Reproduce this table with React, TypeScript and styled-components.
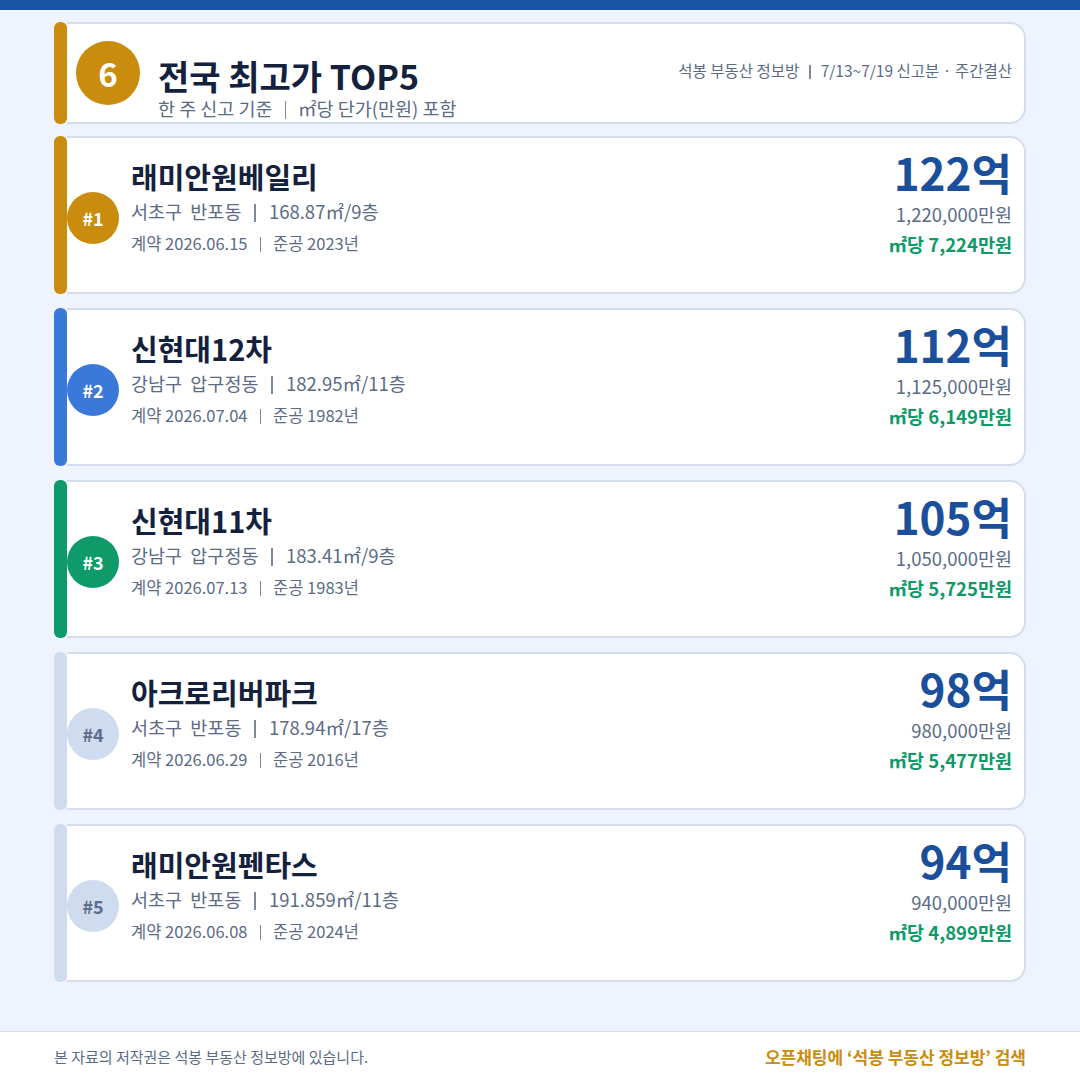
import styled, { createGlobalStyle } from 'styled-components';

const GlobalStyle = createGlobalStyle`
  html, body {
    margin: 0;
    padding: 0;
    background: #eef3fd;
  }
  * {
    box-sizing: border-box;
  }
  body {
    font-family: "Noto Sans CJK KR", "Noto Sans", sans-serif;
  }
`;

type Rank = {
  rank: number;
  name: string;
  location: string;
  area: string;
  contract: string;
  built: string;
  price: string;
  won: string;
  perArea: string;
  accent: string;
  badgeText: string;
};

const ranks: Rank[] = [
  {
    rank: 1,
    name: '래미안원베일리',
    location: '서초구  반포동',
    area: '168.87㎡/9층',
    contract: '2026.06.15',
    built: '2023',
    price: '122',
    won: '1,220,000만원',
    perArea: '7,224',
    accent: '#c98c0c',
    badgeText: '#ffffff',
  },
  {
    rank: 2,
    name: '신현대12차',
    location: '강남구  압구정동',
    area: '182.95㎡/11층',
    contract: '2026.07.04',
    built: '1982',
    price: '112',
    won: '1,125,000만원',
    perArea: '6,149',
    accent: '#3a78d9',
    badgeText: '#ffffff',
  },
  {
    rank: 3,
    name: '신현대11차',
    location: '강남구  압구정동',
    area: '183.41㎡/9층',
    contract: '2026.07.13',
    built: '1983',
    price: '105',
    won: '1,050,000만원',
    perArea: '5,725',
    accent: '#0f9a6a',
    badgeText: '#ffffff',
  },
  {
    rank: 4,
    name: '아크로리버파크',
    location: '서초구  반포동',
    area: '178.94㎡/17층',
    contract: '2026.06.29',
    built: '2016',
    price: '98',
    won: '980,000만원',
    perArea: '5,477',
    accent: '#cfdbef',
    badgeText: '#5c6d8c',
  },
  {
    rank: 5,
    name: '래미안원펜타스',
    location: '서초구  반포동',
    area: '191.859㎡/11층',
    contract: '2026.06.08',
    built: '2024',
    price: '94',
    won: '940,000만원',
    perArea: '4,899',
    accent: '#cfdbef',
    badgeText: '#5c6d8c',
  },
];

export default function App() {
  return (
    <Page>
      <GlobalStyle />
      <TopBar />
      <Main>
        <Row $height={102}>
          <Accent $color="#c98c0c" />
          <HeaderBody>
            <HeaderNumber>6</HeaderNumber>
            <TitleBlock>
              <Title>전국 최고가 TOP5</Title>
              <Subtitle>
                한 주 신고 기준<Sep $gap={12} />㎡당 단가(만원) 포함
              </Subtitle>
            </TitleBlock>
            <HeaderMeta>
              석봉 부동산 정보방<Sep $gap={10} />7/13~7/19 신고분 · 주간결산
            </HeaderMeta>
          </HeaderBody>
        </Row>
        <List>
          {ranks.map((r) => (
            <Row key={r.rank} $height={158}>
              <Accent $color={r.accent} />
              <CardBody>
                <Badge $bg={r.accent} $fg={r.badgeText}>#{r.rank}</Badge>
                <Info>
                  <Name>{r.name}</Name>
                  <Location>
                    {r.location}
                    <Sep $gap={13} />
                    {r.area}
                  </Location>
                  <Contract>
                    계약 {r.contract}
                    <Sep $gap={12} />
                    준공 {r.built}년
                  </Contract>
                </Info>
                <PriceBlock>
                  <Price>{r.price}억</Price>
                  <Won>{r.won}</Won>
                  <PerArea>㎡당 {r.perArea}만원</PerArea>
                </PriceBlock>
              </CardBody>
            </Row>
          ))}
        </List>
      </Main>
      <Footer>
        <Copyright>본 자료의 저작권은 석봉 부동산 정보방에 있습니다.</Copyright>
        <Search>오픈채팅에 ‘석봉 부동산 정보방’ 검색</Search>
      </Footer>
    </Page>
  );
}

const Page = styled.div`
  width: 1080px;
  height: 1080px;
  display: flex;
  flex-direction: column;
  background: #eef3fd;
  overflow: hidden;
`;

const TopBar = styled.div`
  height: 10px;
  flex-shrink: 0;
  background: #1b55a2;
`;

const Main = styled.main`
  flex: 1;
  padding: 12px 54px 0;
  display: flex;
  flex-direction: column;
  gap: 12px;
`;

const List = styled.div`
  display: flex;
  flex-direction: column;
  gap: 14px;
`;

const Row = styled.section<{ $height: number }>`
  display: flex;
  height: ${(p) => p.$height}px;
`;

const Accent = styled.div<{ $color: string }>`
  width: 13px;
  flex-shrink: 0;
  border-radius: 6px;
  background: ${(p) => p.$color};
`;

const Sep = styled.span<{ $gap: number }>`
  display: inline-block;
  width: 1.5px;
  height: 0.95em;
  margin: 0 ${(p) => p.$gap}px;
  background: currentColor;
  opacity: 0.8;
  vertical-align: -0.15em;
`;

const HeaderBody = styled.div`
  flex: 1;
  display: flex;
  align-items: center;
  background: #fff;
  border: 2px solid #d3ddef;
  border-left: none;
  border-radius: 0 16px 16px 0;
  padding: 0 12px 0 9px;
`;

const HeaderNumber = styled.div`
  width: 64px;
  height: 64px;
  border-radius: 50%;
  background: #c98c0c;
  color: #fff;
  font-size: 33px;
  font-weight: 700;
  display: flex;
  align-items: center;
  justify-content: center;
  flex-shrink: 0;
`;

const TitleBlock = styled.div`
  align-self: flex-start;
  padding-top: 33px;
  margin-left: 18px;
  display: flex;
  flex-direction: column;
  gap: 2px;
  flex: 1;
`;

const Title = styled.h1`
  margin: 0;
  font-size: 34px;
  line-height: 38px;
  font-weight: 700;
  color: #14213d;
`;

const Subtitle = styled.div`
  font-size: 18.5px;
  line-height: 22px;
  color: #5b6b85;
  white-space: nowrap;
`;

const HeaderMeta = styled.div`
  font-size: 15.5px;
  line-height: 20px;
  color: #5b6b85;
  margin-bottom: 6px;
  white-space: nowrap;
`;

const CardBody = styled.div`
  flex: 1;
  display: flex;
  align-items: flex-start;
  background: #fff;
  border: 2px solid #d3ddef;
  border-left: none;
  border-radius: 0 16px 16px 0;
  padding-right: 12px;
`;

const Badge = styled.div<{ $bg: string; $fg: string }>`
  align-self: center;
  margin-top: 6px;
  width: 52px;
  height: 52px;
  border-radius: 50%;
  background: ${(p) => p.$bg};
  color: ${(p) => p.$fg};
  font-size: 18px;
  font-weight: 700;
  display: flex;
  align-items: center;
  justify-content: center;
  flex-shrink: 0;
`;

const Info = styled.div`
  flex: 1;
  margin-left: 12px;
  padding-top: 20px;
  display: flex;
  flex-direction: column;
`;

const Name = styled.div`
  font-size: 29px;
  line-height: 36px;
  font-weight: 700;
  color: #14213d;
`;

const Location = styled.div`
  margin-top: 4px;
  font-size: 18.5px;
  line-height: 26px;
  color: #5b6b85;
  white-space: pre;
`;

const Contract = styled.div`
  margin-top: 7px;
  font-size: 16.5px;
  line-height: 24px;
  color: #5b6b85;
  white-space: pre;
`;

const PriceBlock = styled.div`
  padding-top: 9px;
  display: flex;
  flex-direction: column;
  align-items: flex-end;
`;

const Price = styled.div`
  font-size: 44px;
  line-height: 50px;
  font-weight: 700;
  color: #1a4f9c;
`;

const Won = styled.div`
  margin-top: 5px;
  font-size: 18.5px;
  line-height: 24px;
  color: #5b6b85;
`;

const PerArea = styled.div`
  margin-top: 6px;
  font-size: 18.5px;
  line-height: 24px;
  font-weight: 700;
  color: #0f9a68;
`;

const Footer = styled.footer`
  height: 49px;
  flex-shrink: 0;
  background: #fff;
  border-top: 1px solid #d3ddef;
  padding: 0 54px;
  display: flex;
  align-items: center;
  justify-content: space-between;
`;

const Copyright = styled.div`
  font-size: 15px;
  color: #5b6b85;
`;

const Search = styled.div`
  font-size: 17px;
  font-weight: 700;
  color: #c98c0c;
`;
